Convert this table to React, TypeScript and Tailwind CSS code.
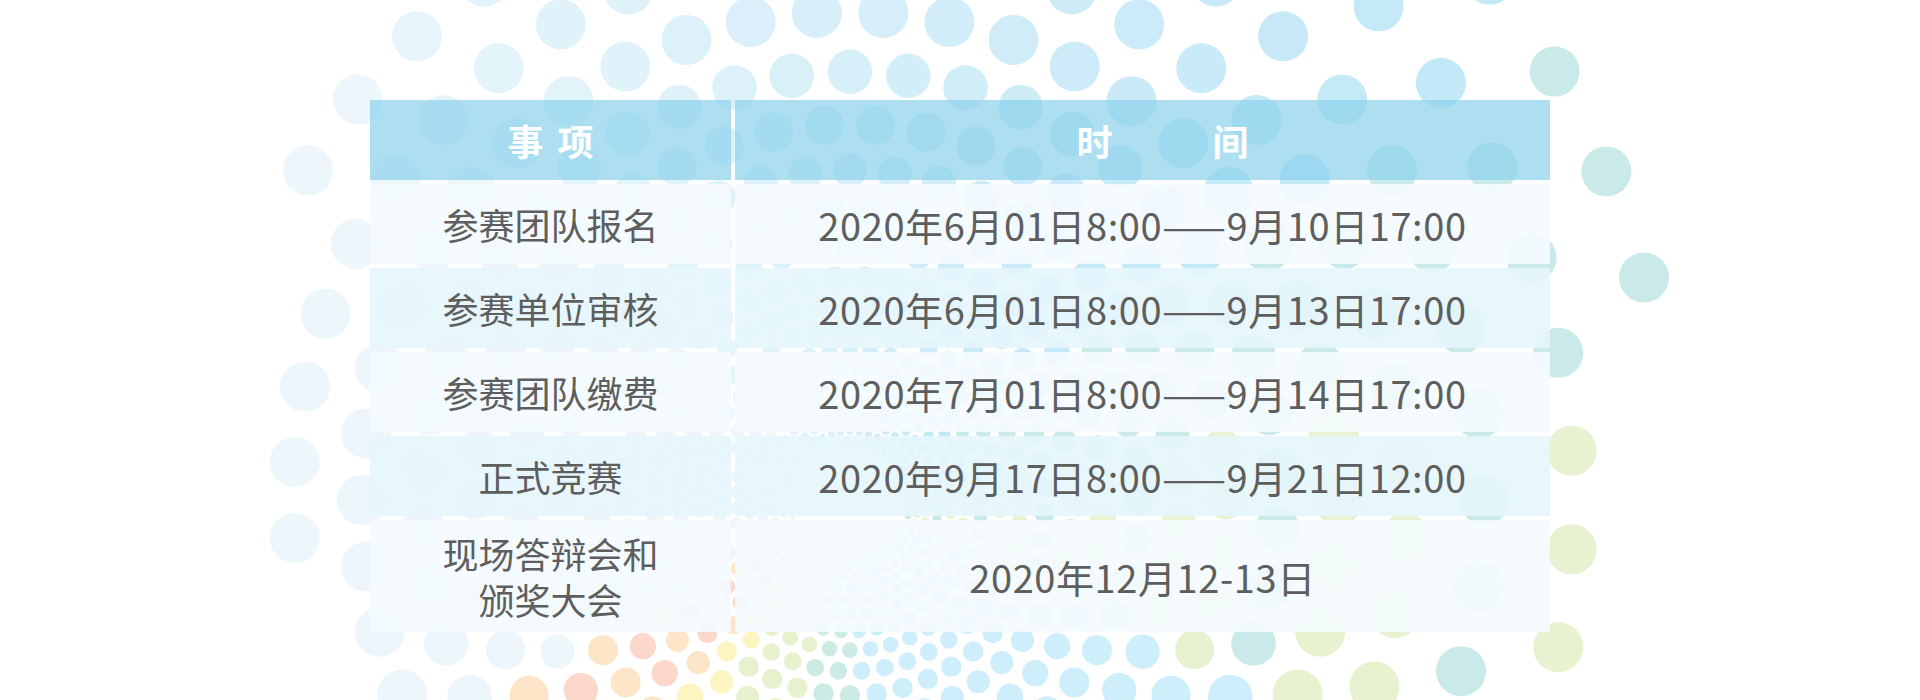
import React from 'react'

type Dot = { x: number; y: number; r: number; c: string }

const CX = 850
const CY = 500
const PER_RING = 46

const rows = [
  { item: ['参赛团队报名'], time: '2020年6月01日8:00——9月10日17:00', tall: false },
  { item: ['参赛单位审核'], time: '2020年6月01日8:00——9月13日17:00', tall: false },
  { item: ['参赛团队缴费'], time: '2020年7月01日8:00——9月14日17:00', tall: false },
  { item: ['正式竞赛'], time: '2020年9月17日8:00——9月21日12:00', tall: false },
  { item: ['现场答辩会和', '颁奖大会'], time: '2020年12月12-13日', tall: true },
]

function hex(c: string) {
  return [1, 3, 5].map((i) => parseInt(c.slice(i, i + 2), 16))
}

function lerp(a: string, b: string, t: number) {
  const x = hex(a)
  const y = hex(b)
  const m = x.map((v, i) => Math.round(v + (y[i] - v) * t))
  return `rgb(${m[0]},${m[1]},${m[2]})`
}

function dotColor(deg: number, k: number) {
  if (deg >= 150 || deg < -140) return '#ecf6fb'
  if (deg >= 132) return k % 2 ? '#fbd8cb' : '#fde5c8'
  if (deg >= 122) return '#fcf4c1'
  if (deg >= 104) return '#e6f1cd'
  if (deg >= 88) return '#cdebe5'
  if (deg >= 25) return '#cdeefa'
  if (deg >= -35) {
    if (deg < -10) return '#c9eae9'
    return k % 3 === 0 ? '#c9eae9' : '#e6f2d0'
  }
  const t = Math.min(1, Math.max(0, (deg + 140) / 105))
  return lerp('#e8f5fb', '#c3e8f7', t)
}

// ring halftone behind the table
function buildDots(): Dot[] {
  const dots: Dot[] = []
  let R = 60
  let k = 0
  while (R < 1150) {
    for (let j = 0; j < PER_RING; j++) {
      const a = ((j + (k % 2) * 0.5) / PER_RING) * Math.PI * 2
      const x = CX + R * Math.cos(a)
      const y = CY + R * Math.sin(a)
      if (x < -40 || x > 1960 || y < -40 || y > 740) continue
      const ex = (x - 965) / 700
      const ey = (y - 380) / 650
      if (ex * ex + ey * ey > 1) continue
      const deg = (Math.atan2(y - CY, x - CX) * 180) / Math.PI
      dots.push({ x, y, r: Math.min(0.052 * R, 25), c: dotColor(deg, k) })
    }
    R *= 1.14
    k++
  }
  return dots
}

const dots = buildDots()

export default function App() {
  return (
    <div
      className="relative w-full h-[700px] overflow-hidden bg-white"
      style={{ fontFamily: '"Noto Sans CJK SC", "Noto Sans", sans-serif' }}
    >
      <svg className="absolute inset-0" width={1920} height={700} viewBox="0 0 1920 700">
        {dots.map((d, i) => (
          <circle key={i} cx={d.x} cy={d.y} r={d.r} fill={d.c} />
        ))}
      </svg>

      <div className="relative z-10 mx-auto w-[1180px] pt-[100px]">
        <div className="grid grid-cols-[361px_815px] gap-[4px]">
          {/* header */}
          <div className="h-[80px] flex items-center justify-center gap-[14px] bg-[rgba(140,210,235,0.7)] text-white text-[36px] font-bold">
            <span>事</span>
            <span>项</span>
          </div>
          <div className="h-[80px] flex items-center justify-center gap-[100px] pl-[40px] bg-[rgba(140,210,235,0.7)] text-white text-[36px] font-bold">
            <span>时</span>
            <span>间</span>
          </div>

          {rows.map((row, i) => {
            const bg = i % 2 === 0 ? 'bg-[rgba(244,251,254,0.9)]' : 'bg-[rgba(229,246,252,0.9)]'
            const h = row.tall ? 'h-[112px]' : 'h-[80px]'
            return (
              <React.Fragment key={i}>
                <div className={`${h} ${bg} flex flex-col items-center justify-center text-[36px] text-[#5e5e5e]`}>
                  {row.item.map((line) => (
                    <span key={line} className="block h-[46px] leading-[46px]">
                      {line}
                    </span>
                  ))}
                </div>
                <div className={`${h} ${bg} flex items-center justify-center text-[38px] tracking-[0.6px] text-[#5e5e5e]`}>
                  {row.time}
                </div>
              </React.Fragment>
            )
          })}
        </div>
      </div>
    </div>
  )
}
